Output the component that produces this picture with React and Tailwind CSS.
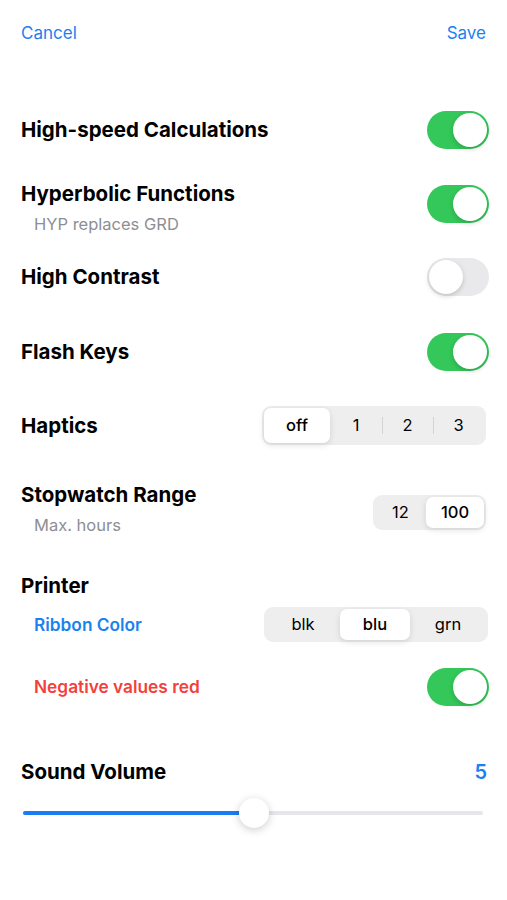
import React, { useState } from 'react';

const font = { fontFamily: 'Inter, "Liberation Sans", sans-serif' };

const Toggle = ({ on, className = '' }) => (
  <div
    className={`w-[62px] h-[38px] rounded-full p-[2px] flex items-center ${on ? 'bg-[#34c759] justify-end' : 'bg-[#e9e9eb] justify-start'} ${className}`}
  >
    <div className="w-[34px] h-[34px] rounded-full bg-white shadow-[0_2px_5px_rgba(0,0,0,0.18)]" />
  </div>
);

const Segmented = ({ items, selected, widths, height, className = '' }) => (
  <div className={`flex items-center rounded-[9px] bg-[#eeeeef] p-[2px] ${className}`} style={{ height }}>
    {items.map((item, i) => {
      const active = i === selected;
      const showDivider = i > 0 && i !== selected && i - 1 !== selected;
      return (
        <div key={item} className="relative h-full flex items-center justify-center" style={{ width: widths[i] }}>
          {showDivider && <div className="absolute left-0 top-[9px] bottom-[9px] w-px bg-[#d4d4d8]" />}
          <div
            className={`h-full w-full flex items-center justify-center rounded-[7px] text-[16.5px] text-black ${active ? 'bg-white shadow-[0_2px_6px_rgba(0,0,0,0.12)] font-medium' : ''}`}
          >
            {item}
          </div>
        </div>
      );
    })}
  </div>
);

const Title = ({ children }) => (
  <div className="text-[20.5px] leading-[24px] font-bold text-black">{children}</div>
);

const Sub = ({ children }) => (
  <div className="text-[16.5px] leading-[20px] text-[#8e8e93] pl-[13px] mt-[8px]">{children}</div>
);

export default function App() {
  const [volume] = useState(5);
  const pct = ((254 - 23) / (483 - 23)) * 100;

  return (
    <div className="w-[507px] h-[900px] bg-white" style={font}>
      <div className="h-[67px] px-[21px] flex items-center justify-between text-[17px] text-[#1a82f0]">
        <span>Cancel</span>
        <span>Save</span>
      </div>

      <div className="pl-[21px] pr-[18px]">
        <div className="mt-[44px] h-[38px] flex items-center justify-between">
          <Title>High-speed Calculations</Title>
          <Toggle on />
        </div>

        <div className="mt-[33px] flex items-start justify-between">
          <div>
            <Title>Hyperbolic Functions</Title>
            <Sub>HYP replaces GRD</Sub>
          </div>
          <Toggle on className="mt-[3px]" />
        </div>

        <div className="mt-[24px] h-[38px] flex items-center justify-between">
          <Title>High Contrast</Title>
          <Toggle on={false} />
        </div>

        <div className="mt-[37px] h-[38px] flex items-center justify-between">
          <Title>Flash Keys</Title>
          <Toggle on />
        </div>

        <div className="mt-[35px] h-[39px] flex items-center justify-between">
          <Title>Haptics</Title>
          <Segmented items={['off', '1', '2', '3']} selected={0} widths={[66, 52, 51, 51]} height={39} className="mr-[3px]" />
        </div>

        <div className="mt-[38px] flex items-start justify-between">
          <div>
            <Title>Stopwatch Range</Title>
            <Sub>Max. hours</Sub>
          </div>
          <Segmented items={['12', '100']} selected={1} widths={[51, 58]} height={35} className="mt-[12px] mr-[3px]" />
        </div>

        <div className="mt-[39px]">
          <Title>Printer</Title>
        </div>

        <div className="mt-[9px] h-[35px] flex items-center justify-between">
          <div className="pl-[13px] text-[17.3px] font-semibold text-[#1a82f0]">Ribbon Color</div>
          <Segmented items={['blk', 'blu', 'grn']} selected={1} widths={[74, 70, 76]} height={35} className="mr-[1px]" />
        </div>

        <div className="mt-[26px] h-[38px] flex items-center justify-between">
          <div className="pl-[13px] text-[17.3px] font-semibold text-[#f4403a]">Negative values red</div>
          <Toggle on />
        </div>

        <div className="mt-[54px] h-[24px] flex items-center justify-between pr-[2px]">
          <Title>Sound Volume</Title>
          <span className="text-[20px] font-semibold text-[#1a82f0]">{volume}</span>
        </div>
      </div>

      <div className="mt-[14px] ml-[23px] w-[460px] h-[30px] relative flex items-center">
        <div className="w-full h-[4px] rounded-full bg-[#e5e5ea] flex">
          <div className="h-full rounded-full bg-[#1a7cf2]" style={{ width: `${pct}%` }} />
        </div>
        <div
          className="absolute top-0 w-[30px] h-[30px] rounded-full bg-white shadow-[0_2px_8px_rgba(0,0,0,0.2)]"
          style={{ left: `calc(${pct}% - 15px)` }}
        />
      </div>
    </div>
  );
}
